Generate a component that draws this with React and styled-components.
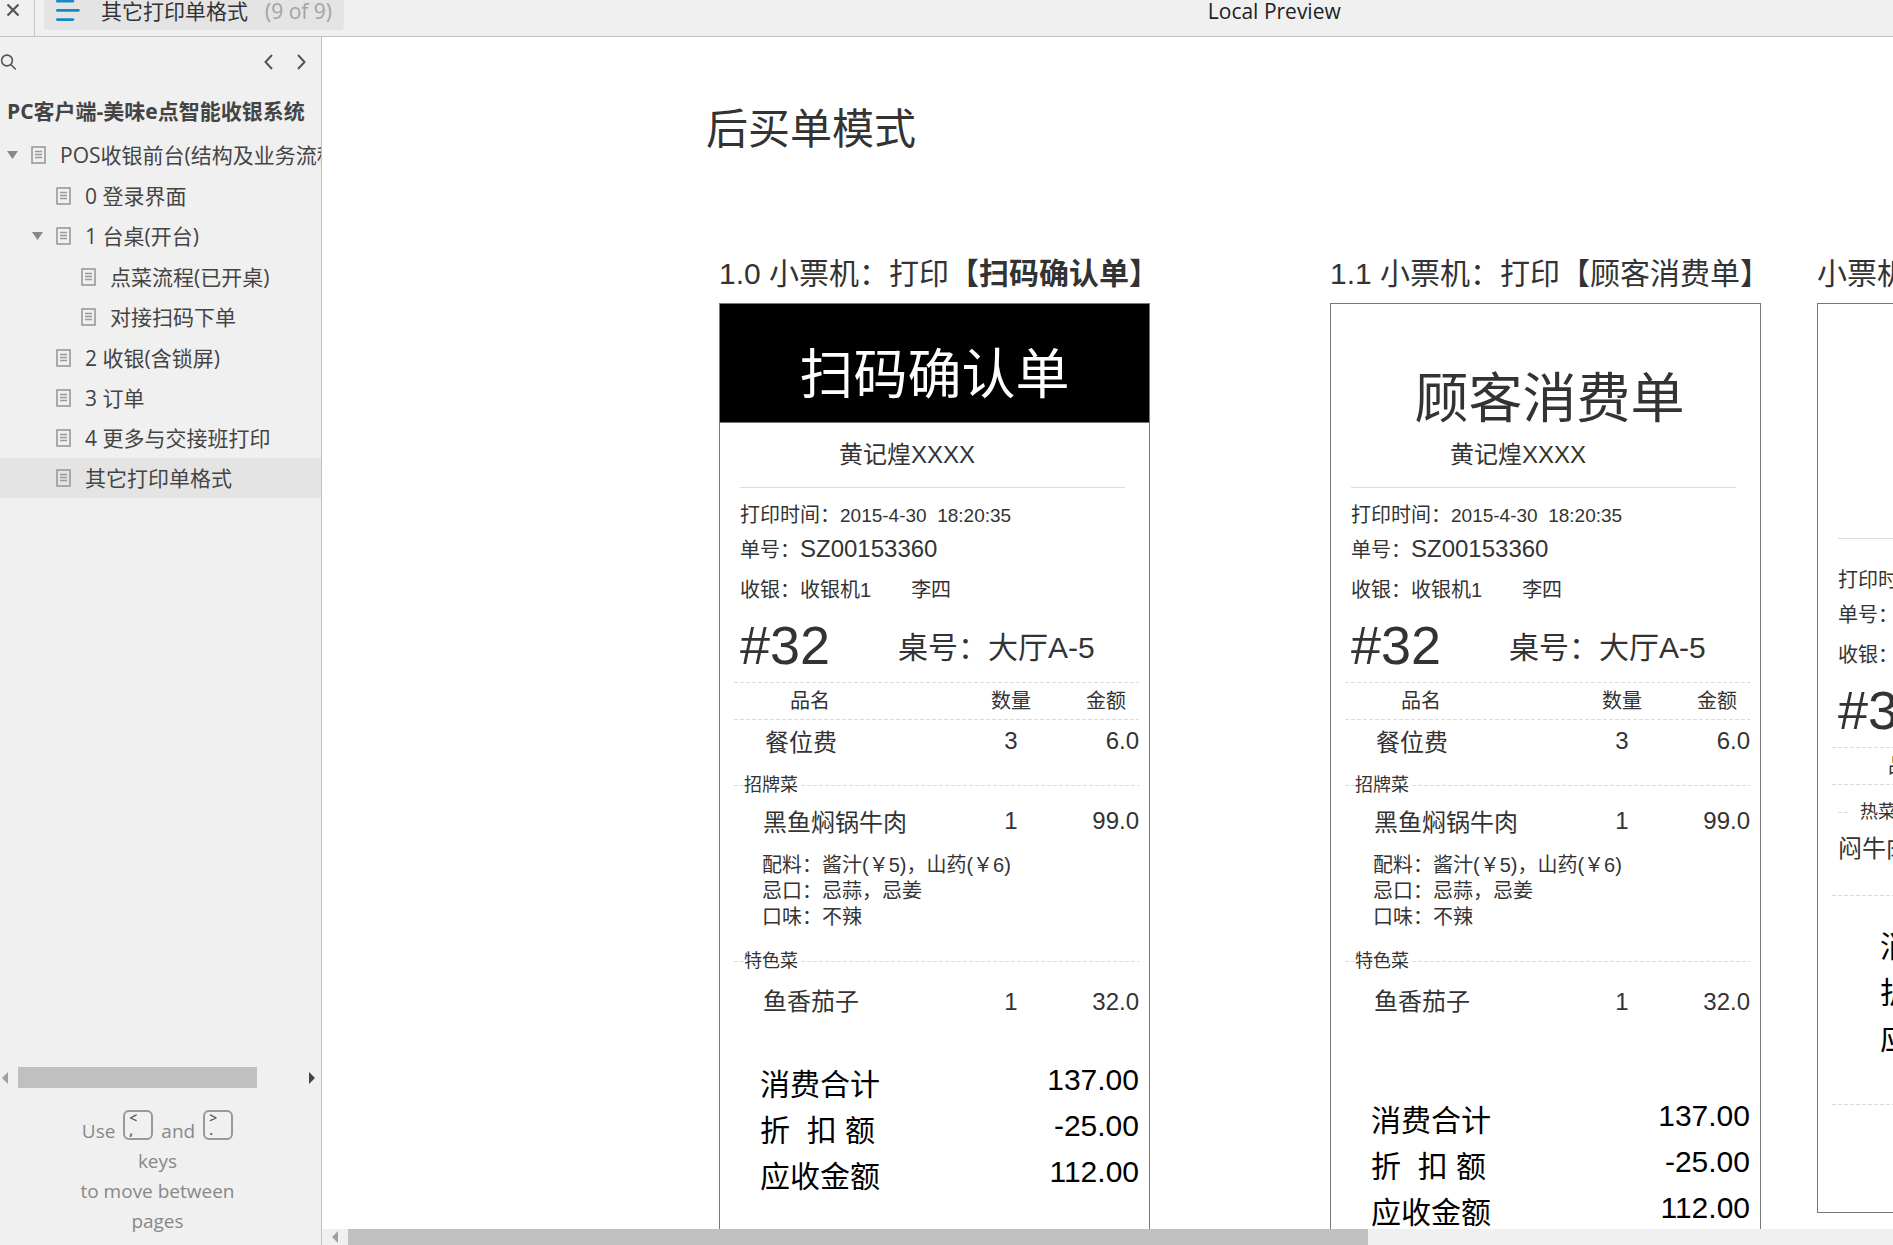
import React, { useState } from "react";
import styled, { createGlobalStyle } from "styled-components";

const GlobalStyle = createGlobalStyle`
  * {
    box-sizing: border-box;
  }

  body {
    margin: 0;
    overflow: hidden;
    font-family: "Open Sans", "Noto Sans CJK SC", sans-serif;
    color: #333;
    background: #fff;
  }

  button {
    padding: 0;
    border: none;
    background: transparent;
    font: inherit;
    color: inherit;
    cursor: pointer;
  }
`;

const Page = styled.div`
  display: flex;
  flex-direction: column;
  height: 100vh;
`;

/* ---------- top bar ---------- */

const TopBar = styled.header`
  display: flex;
  flex: none;
  align-items: flex-start;
  height: 37px;
  background: #f0f0f0;
  border-bottom: 1px solid #c2c2c2;
  font-size: 21px;
  line-height: 22px;
`;

const CloseButton = styled.button`
  display: flex;
  justify-content: center;
  width: 35px;
  height: 36px;
  padding: 3px 8px 0 0;
  border-right: 1px solid #c8c8c8;
`;

const PageTab = styled.button`
  display: flex;
  align-items: flex-start;
  height: 30px;
  margin-left: 9px;
  padding: 0 12px;
  background: #e4e4e4;
  border-radius: 0 0 4px 4px;
  line-height: 22px;
`;

const TabName = styled.span`
  margin-left: 21px;
`;

const TabCount = styled.span`
  margin-left: 17px;
  color: #a3a3a3;
`;

const Spacer = styled.div`
  flex: ${(props) => props.$grow} 1 0;
`;

const PreviewTitle = styled.div`
  font-size: 21px;
  color: #222;
`;

/* ---------- sidebar ---------- */

const Body = styled.div`
  display: flex;
  flex: 1;
  min-height: 0;
`;

const Sidebar = styled.aside`
  display: flex;
  flex: none;
  flex-direction: column;
  width: 322px;
  background: #f0f0f0;
  border-right: 1px solid #c2c2c2;
  color: #444;
`;

const SidebarTools = styled.div`
  display: flex;
  align-items: center;
  height: 50px;
  padding-right: 15px;
`;

const ToolButton = styled.button`
  display: flex;
  margin-right: ${(props) => props.$right || 0}px;
`;

const ProjectTitle = styled.h1`
  margin: 4px 0;
  padding-left: 7px;
  font-size: 21px;
  line-height: 40px;
  font-weight: 700;
  white-space: nowrap;
`;

const Tree = styled.nav`
  flex: 1;
  min-height: 0;
  overflow: hidden;
`;

const TreeList = styled.ul`
  margin: 0;
  padding: ${(props) => (props.$nested ? "1px 0" : "0")};
  list-style: none;
`;

const TreeRow = styled.div`
  display: flex;
  align-items: center;
  height: 40px;
  padding-left: ${(props) => 7 + props.$level * 25}px;
  background: ${(props) => (props.$active ? "#e4e4e4" : "transparent")};
`;

const Caret = styled.button`
  flex: none;
  width: 11px;
  height: 8px;
  margin-right: 13px;
  background: #888;
  clip-path: polygon(0 0, 100% 0, 50% 100%);
`;

const CaretSpace = styled.span`
  flex: none;
  width: 24px;
`;

const TreeLink = styled.a`
  display: flex;
  align-items: center;
  gap: 14px;
  color: inherit;
  font-size: 21px;
  line-height: 40px;
  text-decoration: none;
  white-space: nowrap;

  svg {
    flex: none;
  }
`;

const SidebarFooter = styled.div`
  padding: 22px 6px 9px 0;
  color: #888;
  font-size: 19px;
  line-height: 30px;
  text-align: center;
`;

const KeysLine = styled.div`
  display: flex;
  align-items: flex-end;
  justify-content: center;
  gap: 8px;
  height: 36px;
`;

const KeyCap = styled.kbd`
  display: flex;
  flex-direction: column;
  align-self: flex-start;
  width: 30px;
  height: 30px;
  padding-left: 4px;
  border: 2px solid #999;
  border-radius: 6px;
  color: #555;
  font-family: "Open Sans", sans-serif;
  font-size: 14px;
  font-weight: 600;
  line-height: 12px;
  text-align: left;
`;

/* ---------- scroll bars ---------- */

const ScrollBar = styled.div`
  display: flex;
  flex: none;
  align-items: center;
  height: ${(props) => props.$size}px;
  background: #f0f0f0;
`;

const ScrollArrow = styled.button`
  display: flex;
  align-items: center;
  justify-content: ${(props) => props.$align || "center"};
  width: ${(props) => props.$width}px;
  height: 100%;
  padding: 0 2px;
  color: ${(props) => (props.$dim ? "#a0a0a0" : "#444")};
`;

const ScrollTrack = styled.div`
  flex: 1;
  height: 100%;
`;

const ScrollThumb = styled.div`
  width: ${(props) => props.$length}%;
  height: 100%;
  background: #c0c0c0;
`;

/* ---------- canvas ---------- */

const Main = styled.main`
  display: flex;
  flex: 1;
  flex-direction: column;
  min-width: 0;
`;

const Canvas = styled.div`
  flex: 1;
  min-height: 0;
  padding: 63px 0 0 384px;
  overflow: hidden;
  font-family: "Liberation Sans", "Noto Sans CJK SC", sans-serif;
`;

const CanvasTitle = styled.h2`
  margin: 0;
  font-size: 42px;
  font-weight: 400;
  line-height: 60px;
`;

const Tickets = styled.div`
  display: flex;
  align-items: flex-start;
  padding: 94px 0 0 13px;
`;

const Ticket = styled.section`
  flex: none;
  width: 431px;
  margin-right: ${(props) => props.$after}px;
`;

const TicketHeading = styled.h3`
  margin: 0 0 9px;
  font-size: 30px;
  font-weight: 400;
  line-height: 40px;
  white-space: nowrap;
`;

const Paper = styled.div`
  padding-bottom: 107px;
  border: 1px solid #777;
`;

const Banner = styled.div`
  display: flex;
  align-items: center;
  justify-content: center;
  height: ${(props) => (props.$kind === "blank" ? 170 : 119)}px;
  padding-top: ${(props) => (props.$kind === "dark" ? 24 : 72)}px;
  padding-left: ${(props) => (props.$kind === "plain" ? 8 : 0)}px;
  background: ${(props) => (props.$kind === "dark" ? "#000" : "transparent")};
  color: ${(props) => (props.$kind === "dark" ? "#fff" : "#333")};
  border-bottom: 1px solid ${(props) => (props.$kind === "dark" ? "#777" : "transparent")};
  font-size: 54px;
  line-height: 60px;
`;

const ShopName = styled.div`
  height: 65px;
  margin: 0 24px 0 20px;
  padding-left: 99px;
  border-bottom: 1px solid #ddd;
  font-size: 24px;
  line-height: 64px;
`;

const Meta = styled.div`
  padding: ${(props) => props.$top}px 0 0 20px;
  font-size: 20px;
  line-height: 34px;
  white-space: pre;
`;

const MetaLine = styled.div`
  height: 34px;
  margin: ${(props) => (props.$spaced ? "7px 0" : "0")};
`;

const MetaValue = styled.span`
  font-size: ${(props) => (props.$large ? 24 : 19)}px;
`;

const Cashier = styled.span`
  margin-left: 40px;
`;

const TableLine = styled.div`
  display: flex;
  align-items: center;
  height: 68px;
  font-size: 30px;
`;

const TicketNo = styled.strong`
  width: 158px;
  padding-bottom: 6px;
  font-size: 54px;
  font-weight: 400;
`;

const dashes = "repeating-linear-gradient(to right, #ddd 0 4px, transparent 4px 6px)";

const Items = styled.table`
  width: 405px;
  margin-left: 14px;
  border-spacing: 0;
  table-layout: fixed;

  td {
    padding: 0;
  }
`;

const HeadRow = styled.tr`
  background: ${dashes} top / 100% 1px no-repeat, ${dashes} bottom / 100% 1px no-repeat;
`;

const HeadCell = styled.th`
  width: ${(props) => props.$width || "auto"};
  height: 38px;
  padding: 0;
  font-size: 20px;
  font-weight: 400;
  line-height: 36px;
  text-align: ${(props) => props.$align};
`;

const HeadLabel = styled.span`
  margin: 0 13px 0 ${(props) => props.$left || 0}px;
`;

const NameCell = styled.td`
  height: ${(props) => props.$height}px;
  font-size: 24px;
  line-height: 20px;
`;

const DishName = styled.div`
  padding-left: ${(props) => props.$indent}px;
  white-space: nowrap;
`;

const NumberCell = styled.td`
  font-size: 24px;
  line-height: 20px;
  text-align: ${(props) => props.$align};
`;

const NumberText = styled.div`
  padding-bottom: ${(props) => (props.$low ? 0 : 4)}px;
`;

const GroupLine = styled.div`
  display: flex;
  align-items: center;
  height: ${(props) => props.$height}px;
  padding-left: ${(props) => props.$indent}px;
  font-size: 18px;
  line-height: 20px;
`;

const GroupName = styled.span`
  margin: 0 3px 0 ${(props) => props.$gap}px;
`;

const Dash = styled.span`
  flex: ${(props) => (props.$short ? "none" : "1")};
  width: ${(props) => (props.$short ? "10px" : "auto")};
  height: 1px;
  background: ${dashes};
`;

const Notes = styled.div`
  padding: 10px 0 12px 28px;
  font-size: 20px;
  line-height: 26px;
  white-space: nowrap;
`;

const Divider = styled.hr`
  height: 1px;
  margin: ${(props) => props.$top}px 14px 0;
  border: none;
  background: ${dashes};
`;

const Totals = styled.dl`
  margin: ${(props) => props.$top}px 10px 0 ${(props) => props.$left}px;
  color: #000;
  font-size: 30px;
  line-height: 34px;
`;

const TotalLine = styled.div`
  display: flex;
  align-items: center;
  justify-content: space-between;
  height: 46px;

  dt {
    white-space: pre;
  }

  dd {
    margin: 0;
    padding-bottom: 10px;
  }
`;

const pages = [
  {
    name: "POS收银前台(结构及业务流程)",
    children: [
      { name: "0 登录界面" },
      {
        name: "1 台桌(开台)",
        children: [{ name: "点菜流程(已开桌)" }, { name: "对接扫码下单" }],
      },
      { name: "2 收银(含锁屏)" },
      { name: "3 订单" },
      { name: "4 更多与交接班打印" },
      { name: "其它打印单格式" },
    ],
  },
];

const dishRows = [
  { type: "item", name: "餐位费", count: "3", price: "6.0", height: 46, indent: 31 },
  { type: "group", name: "招牌菜" },
  { type: "item", name: "黑鱼焖锅牛肉", count: "1", price: "99.0", height: 38 },
  {
    type: "notes",
    lines: ["配料：酱汁(￥5)，山药(￥6)", "忌口：忌蒜，忌姜", "口味：不辣"],
  },
  { type: "group", name: "特色菜" },
  { type: "item", name: "鱼香茄子", count: "1", price: "32.0", height: 44, low: true },
];

const hotRows = [
  { type: "group", name: "热菜", height: 54, indent: 6, gap: 12 },
  { type: "item", name: "闷牛肉", height: 20, indent: 6 },
];

const PageIcon = () => (
  <svg width="15" height="18" viewBox="0 0 15 18" fill="none" stroke="#999">
    <rect x="1" y="1" width="13" height="16" strokeWidth="1.6" />
    <path d="M4 5.5h7M4 8.5h7M4 11.5h7" strokeWidth="1.3" />
  </svg>
);

const Triangle = ({ left }) => (
  <svg width="6" height="12" viewBox="0 0 6 12" fill="currentColor">
    <path d={left ? "M6 0v12L0 6z" : "M0 0v12l6-6z"} />
  </svg>
);

function TreeNodes({ nodes, level, active, onSelect }) {
  return (
    <TreeList $nested={level > 0}>
      {nodes.map((node) => (
        <li key={node.name}>
          <TreeRow $level={level} $active={active === node.name}>
            {node.children ? <Caret aria-label="Collapse" /> : <CaretSpace />}
            <TreeLink href="#" onClick={() => onSelect(node.name)}>
              <PageIcon />
              {node.name}
            </TreeLink>
          </TreeRow>
          {node.children && (
            <TreeNodes
              nodes={node.children}
              level={level + 1}
              active={active}
              onSelect={onSelect}
            />
          )}
        </li>
      ))}
    </TreeList>
  );
}

function ItemsTable({ rows }) {
  return (
    <Items>
      <thead>
        <HeadRow>
          <HeadCell $align="left">
            <HeadLabel $left={56}>品名</HeadLabel>
          </HeadCell>
          <HeadCell $align="center" $width="80px">
            数量
          </HeadCell>
          <HeadCell $align="right" $width="88px">
            <HeadLabel>金额</HeadLabel>
          </HeadCell>
        </HeadRow>
      </thead>
      <tbody>
        {rows.map((row) => {
          if (row.type === "group") {
            return (
              <tr key={row.name}>
                <td colSpan={3}>
                  <GroupLine $height={row.height || 38} $indent={row.indent || 0}>
                    <Dash $short />
                    <GroupName $gap={row.gap || 0}>{row.name}</GroupName>
                    {!row.gap && <Dash />}
                  </GroupLine>
                </td>
              </tr>
            );
          }
          if (row.type === "notes") {
            return (
              <tr key="notes">
                <td colSpan={3}>
                  <Notes>
                    {row.lines.map((line) => (
                      <div key={line}>{line}</div>
                    ))}
                  </Notes>
                </td>
              </tr>
            );
          }
          return (
            <tr key={row.name}>
              <NameCell $height={row.height}>
                <DishName $indent={row.indent || 29}>{row.name}</DishName>
              </NameCell>
              <NumberCell $align="center">
                <NumberText $low={row.low}>{row.count}</NumberText>
              </NumberCell>
              <NumberCell $align="right">
                <NumberText $low={row.low}>{row.price}</NumberText>
              </NumberCell>
            </tr>
          );
        })}
      </tbody>
    </Items>
  );
}

function TicketTotals({ top, left, values }) {
  return (
    <Totals $top={top} $left={left}>
      {["消费合计", "折  扣 额", "应收金额"].map((label, i) => (
        <TotalLine key={label}>
          <dt>{label}</dt>
          <dd>{values[i]}</dd>
        </TotalLine>
      ))}
    </Totals>
  );
}

function TicketMeta({ top }) {
  return (
    <Meta $top={top}>
      <MetaLine>
        打印时间：<MetaValue>{"2015-4-30  18:20:35"}</MetaValue>
      </MetaLine>
      <MetaLine>
        单号：<MetaValue $large>SZ00153360</MetaValue>
      </MetaLine>
      <MetaLine $spaced>
        收银：收银机1<Cashier>李四</Cashier>
      </MetaLine>
      <TableLine>
        <TicketNo>#32</TicketNo>
        <span>桌号：大厅A-5</span>
      </TableLine>
    </Meta>
  );
}

function App() {
  const [active, setActive] = useState("其它打印单格式");
  const amounts = ["137.00", "-25.00", "112.00"];

  return (
    <>
      <GlobalStyle />
      <Page>
        <TopBar>
          <CloseButton aria-label="Close">
            <svg width="14" height="14" viewBox="0 0 14 14" stroke="#555" strokeWidth="2.2">
              <path d="M1.5 1.5l11 11M12.5 1.5l-11 11" />
            </svg>
          </CloseButton>
          <PageTab>
            <svg width="24" height="22" viewBox="0 0 24 22" stroke="#1489c4" strokeWidth="2.8" strokeLinecap="round">
              <path d="M1.4 1.2h15.5M1.4 10.4h21M1.4 19.6h15.5" />
            </svg>
            <TabName>其它打印单格式</TabName>
            <TabCount>(9 of 9)</TabCount>
          </PageTab>
          <Spacer $grow={61} />
          <PreviewTitle>Local Preview</PreviewTitle>
          <Spacer $grow={39} />
        </TopBar>

        <Body>
          <Sidebar>
            <SidebarTools>
              <ToolButton aria-label="Search">
                <svg width="17" height="18" viewBox="0 0 17 18" fill="none" stroke="#555" strokeWidth="1.6">
                  <circle cx="7" cy="7.5" r="5.4" />
                  <path d="M10.8 11.5l5 5" />
                </svg>
              </ToolButton>
              <Spacer $grow={1} />
              <ToolButton aria-label="Previous page" $right={24}>
                <svg width="9" height="16" viewBox="0 0 9 16" fill="none" stroke="#555" strokeWidth="2">
                  <path d="M8 1L1.5 8 8 15" />
                </svg>
              </ToolButton>
              <ToolButton aria-label="Next page">
                <svg width="9" height="16" viewBox="0 0 9 16" fill="none" stroke="#555" strokeWidth="2">
                  <path d="M1 1l6.5 7L1 15" />
                </svg>
              </ToolButton>
            </SidebarTools>
            <ProjectTitle>PC客户端-美味e点智能收银系统</ProjectTitle>
            <Tree>
              <TreeNodes nodes={pages} level={0} active={active} onSelect={setActive} />
            </Tree>
            <ScrollBar $size={21}>
              <ScrollArrow aria-label="Scroll left" $width={18} $align="flex-start" $dim>
                <Triangle left />
              </ScrollArrow>
              <ScrollTrack>
                <ScrollThumb $length={84} />
              </ScrollTrack>
              <ScrollArrow aria-label="Scroll right" $width={18}>
                <Triangle />
              </ScrollArrow>
            </ScrollBar>
            <SidebarFooter>
              <KeysLine>
                Use
                <KeyCap>
                  <span>&lt;</span>
                  <span>,</span>
                </KeyCap>
                and
                <KeyCap>
                  <span>&gt;</span>
                  <span>.</span>
                </KeyCap>
              </KeysLine>
              <div>keys</div>
              <div>to move between</div>
              <div>pages</div>
            </SidebarFooter>
          </Sidebar>

          <Main>
            <Canvas>
              <CanvasTitle>后买单模式</CanvasTitle>
              <Tickets>
                <Ticket $after={180}>
                  <TicketHeading>
                    1.0 小票机：打印<b>【扫码确认单】</b>
                  </TicketHeading>
                  <Paper>
                    <Banner $kind="dark">扫码确认单</Banner>
                    <ShopName>黄记煌XXXX</ShopName>
                    <TicketMeta top={10} />
                    <ItemsTable rows={dishRows} />
                    <TicketTotals top={38} left={40} values={amounts} />
                  </Paper>
                </Ticket>

                <Ticket $after={56}>
                  <TicketHeading>1.1 小票机：打印【顾客消费单】</TicketHeading>
                  <Paper>
                    <Banner $kind="plain">顾客消费单</Banner>
                    <ShopName>黄记煌XXXX</ShopName>
                    <TicketMeta top={10} />
                    <ItemsTable rows={dishRows} />
                    <TicketTotals top={74} left={40} values={amounts} />
                  </Paper>
                </Ticket>

                <Ticket $after={0}>
                  <TicketHeading>小票机：打印</TicketHeading>
                  <Paper>
                    <Banner $kind="blank" />
                    <ShopName />
                    <TicketMeta top={24} />
                    <ItemsTable rows={hotRows} />
                    <Divider $top={36} />
                    <TicketTotals top={28} left={62} values={amounts} />
                    <Divider $top={42} />
                  </Paper>
                </Ticket>
              </Tickets>
            </Canvas>
            <ScrollBar $size={16}>
              <ScrollArrow aria-label="Scroll canvas left" $width={26} $dim>
                <Triangle left />
              </ScrollArrow>
              <ScrollTrack>
                <ScrollThumb $length={66} />
              </ScrollTrack>
            </ScrollBar>
          </Main>
        </Body>
      </Page>
    </>
  );
}

export default App;
